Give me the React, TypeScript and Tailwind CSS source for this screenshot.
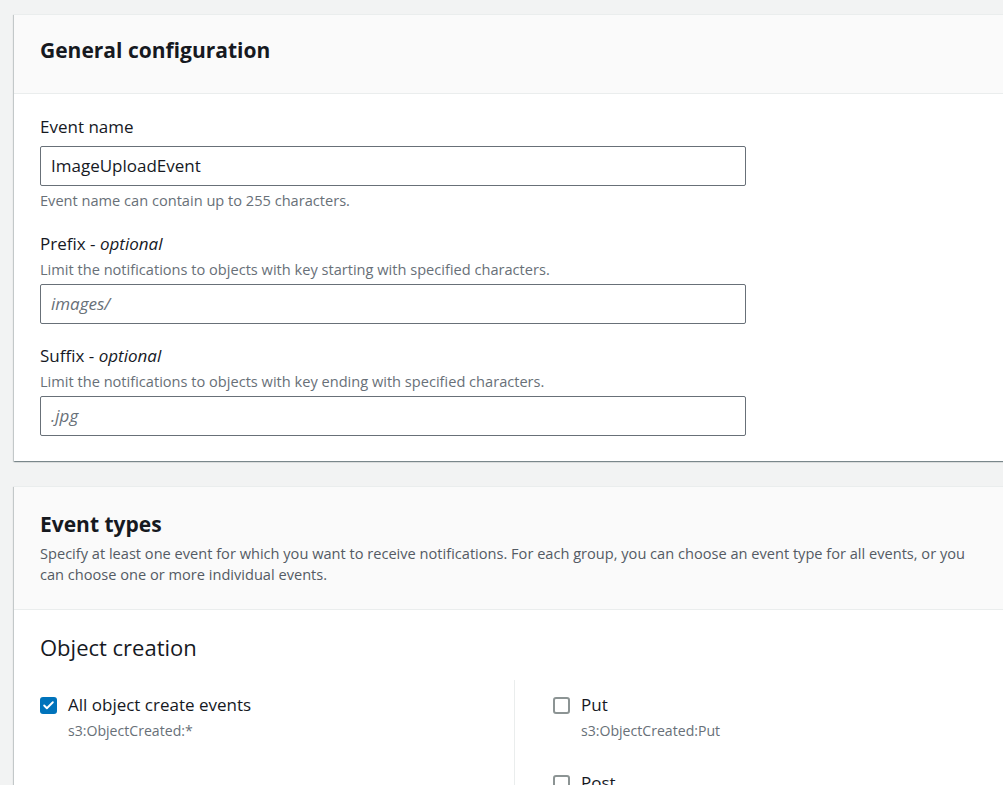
import { Check } from "lucide-react";

const font = { fontFamily: '"Open Sans", "Noto Sans", sans-serif' };

function Field({
  label,
  optional,
  description,
  hint,
  value,
  placeholder,
  className = "",
}: {
  label: string;
  optional?: boolean;
  description?: string;
  hint?: string;
  value?: string;
  placeholder?: string;
  className?: string;
}) {
  return (
    <div className={`flex flex-col ${className}`}>
      <label className="text-[17px] leading-[22px] text-[#16191f]">
        {label}
        {optional && (
          <>
            {" - "}
            <i>optional</i>
          </>
        )}
      </label>
      {description && (
        <p className="mt-[5px] text-[14.6px] leading-[18px] text-[#687078]">{description}</p>
      )}
      <div
        className={`${description ? "mt-[6px]" : "mt-[8px]"} h-[40px] w-[706px] rounded-[2px] border border-[#687078] bg-white px-[10px] flex items-center text-[17px]`}
      >
        {value ? (
          <span className="text-[#16191f]">{value}</span>
        ) : (
          <span className="italic text-[#687078]">{placeholder}</span>
        )}
      </div>
      {hint && <p className="mt-[5px] text-[14.6px] leading-[18px] text-[#687078]">{hint}</p>}
    </div>
  );
}

function EventCheck({ checked, label, code }: { checked?: boolean; label: string; code?: string }) {
  return (
    <div className="flex gap-[11px]">
      <div
        className={`mt-[3px] h-[17px] w-[17px] shrink-0 rounded-[3px] flex items-center justify-center ${
          checked ? "bg-[#0073bb]" : "border-2 border-[#8c9494] bg-white"
        }`}
      >
        {checked && <Check className="h-[13px] w-[13px] text-white" strokeWidth={3.5} />}
      </div>
      <div className="flex flex-col">
        <span className="text-[17px] leading-[22px] text-[#16191f]">{label}</span>
        {code && <span className="mt-[6px] text-[14.1px] leading-[18px] text-[#687078]">{code}</span>}
      </div>
    </div>
  );
}

const cardShadow =
  "shadow-[0_1px_1px_0_rgba(0,28,36,0.3),1px_1px_1px_0_rgba(0,28,36,0.15),-1px_1px_1px_0_rgba(0,28,36,0.15)]";

export default function App() {
  return (
    <div className="h-[785px] w-[1003px] overflow-hidden bg-[#f2f3f3] pt-[14px] pl-[14px]" style={font}>
      {/* General configuration */}
      <div className={`w-[1010px] border-t border-[#eaeded] bg-white ${cardShadow}`}>
        <div className="border-b border-[#eaeded] bg-[#fafafa] px-[26px] pt-[20px] pb-[28px]">
          <h2 className="text-[21px] font-bold leading-[30px] text-[#16191f]">General configuration</h2>
        </div>
        <div className="flex flex-col px-[26px] pt-[22px] pb-[25px]">
          <Field label="Event name" value="ImageUploadEvent" hint="Event name can contain up to 255 characters." />
          <Field
            className="mt-[24px]"
            label="Prefix"
            optional
            description="Limit the notifications to objects with key starting with specified characters."
            placeholder="images/"
          />
          <Field
            className="mt-[21px]"
            label="Suffix"
            optional
            description="Limit the notifications to objects with key ending with specified characters."
            placeholder=".jpg"
          />
        </div>
      </div>

      {/* Event types */}
      <div className={`mt-[25px] w-[1010px] border-t border-[#eaeded] bg-white ${cardShadow}`}>
        <div className="border-b border-[#eaeded] bg-[#fafafa] px-[26px] pt-[22px] pb-[24px]">
          <h2 className="text-[21px] font-bold leading-[30px] text-[#16191f]">Event types</h2>
          <p className="mt-[4px] max-w-[945px] text-[14.6px] leading-[21px] text-[#545b64]">
            Specify at least one event for which you want to receive notifications. For each group, you can choose an
            event type for all events, or you can choose one or more individual events.
          </p>
        </div>
        <div className="px-[26px] pt-[22px] pb-[20px]">
          <h3 className="text-[22px] leading-[30px] text-[#16191f]">Object creation</h3>
          <div className="mt-[18px] grid grid-cols-[474px_1fr]">
            <div className="pt-[14px]">
              <EventCheck checked label="All object create events" code="s3:ObjectCreated:*" />
            </div>
            <div className="flex flex-col gap-[32px] border-l border-[#eaeded] pl-[38px] pt-[14px]">
              <EventCheck label="Put" code="s3:ObjectCreated:Put" />
              <EventCheck label="Post" code="s3:ObjectCreated:Post" />
            </div>
          </div>
        </div>
      </div>
    </div>
  );
}
